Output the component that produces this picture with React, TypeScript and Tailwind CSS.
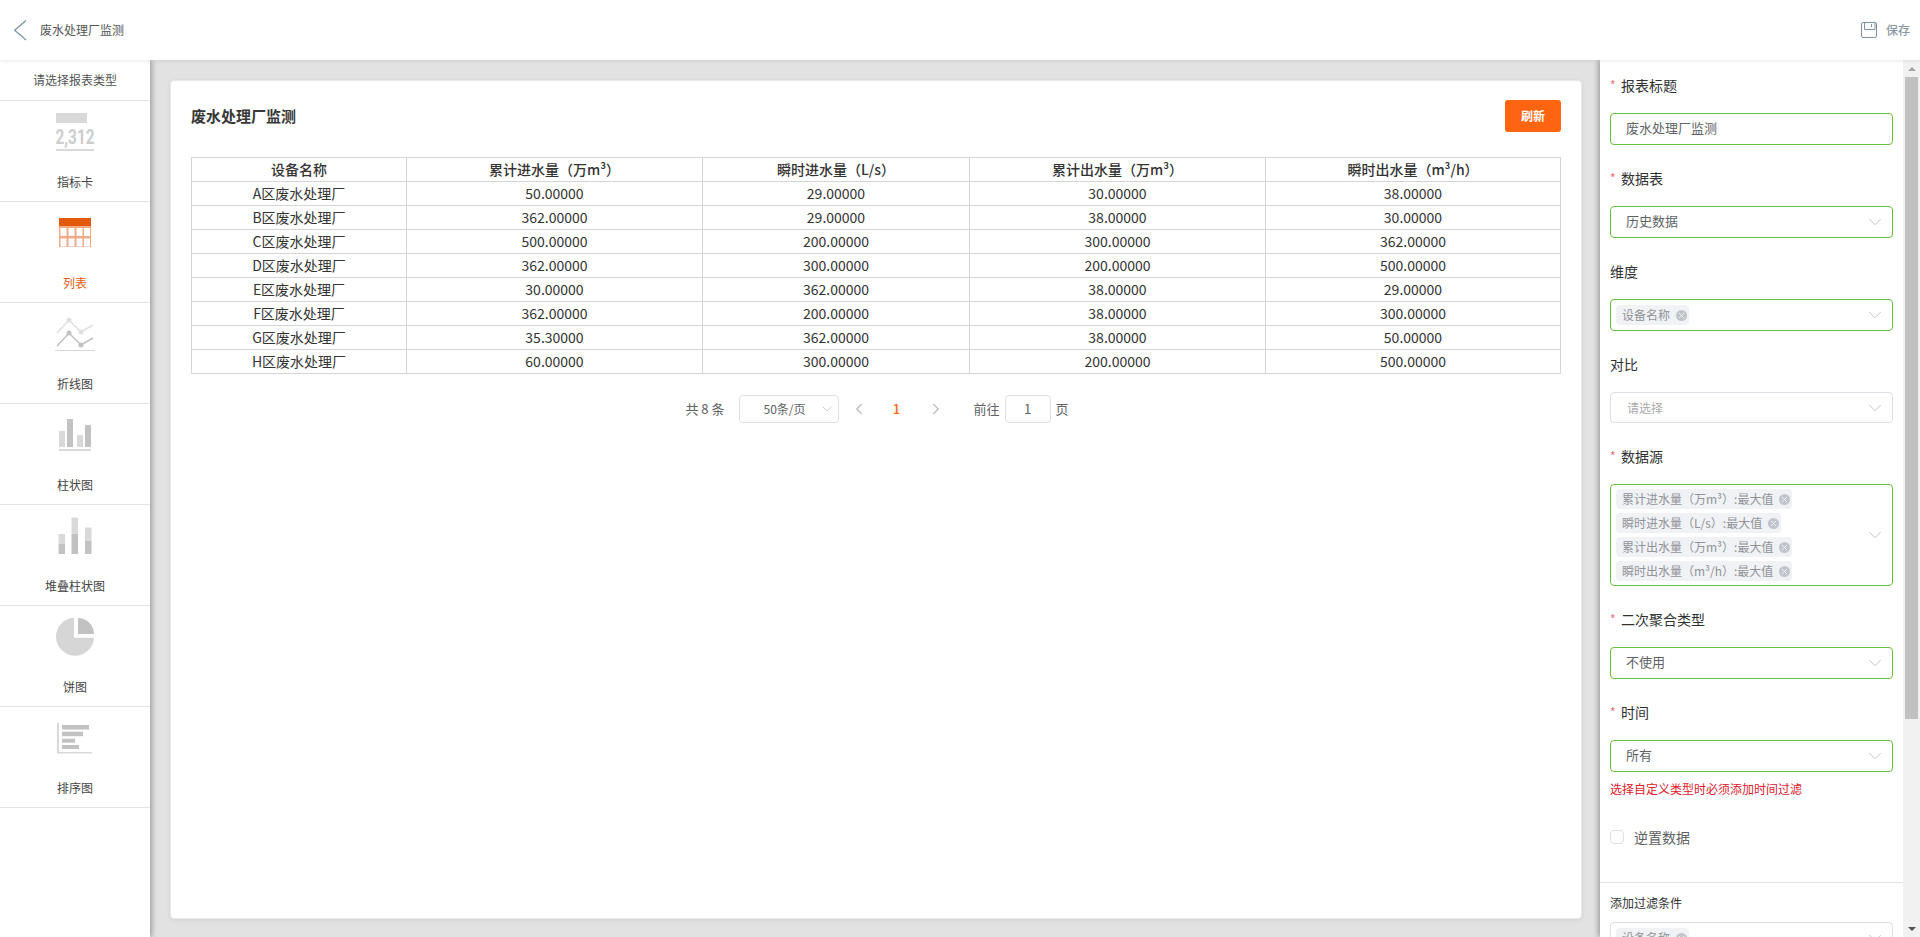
import { ChevronDown, ChevronLeft, ChevronRight, X } from 'lucide-react';
import type { ReactNode } from 'react';

const LIGHT = '#d9d9d9';
const DARK = '#c2c2c2';

const rows = [
  ['A区废水处理厂', '50.00000', '29.00000', '30.00000', '38.00000'],
  ['B区废水处理厂', '362.00000', '29.00000', '38.00000', '30.00000'],
  ['C区废水处理厂', '500.00000', '200.00000', '300.00000', '362.00000'],
  ['D区废水处理厂', '362.00000', '300.00000', '200.00000', '500.00000'],
  ['E区废水处理厂', '30.00000', '362.00000', '38.00000', '29.00000'],
  ['F区废水处理厂', '362.00000', '200.00000', '38.00000', '300.00000'],
  ['G区废水处理厂', '35.30000', '362.00000', '38.00000', '50.00000'],
  ['H区废水处理厂', '60.00000', '300.00000', '200.00000', '500.00000'],
];

const columns = [
  { title: '设备名称', width: 'w-[215px]' },
  { title: '累计进水量（万m³）', width: 'w-[296px]' },
  { title: '瞬时进水量（L/s）', width: 'w-[267px]' },
  { title: '累计出水量（万m³）', width: 'w-[296px]' },
  { title: '瞬时出水量（m³/h）', width: 'w-[295px]' },
];

function IconFrame({ children }: { children: ReactNode }) {
  return (
    <svg width="40" height="40" viewBox="0 0 40 40" className="overflow-visible">
      {children}
    </svg>
  );
}

const chartIcons: { label: string; active?: boolean; icon: ReactNode }[] = [
  {
    label: '指标卡',
    icon: (
      <IconFrame>
        <rect x="1" y="0" width="31" height="10" fill={LIGHT} />
        <text
          x="0.5"
          y="31"
          textLength="39"
          lengthAdjust="spacingAndGlyphs"
          fontFamily="Roboto"
          fontWeight="700"
          fontSize="20"
          fill="#cdcdcd"
        >
          2,312
        </text>
        <rect x="1" y="36" width="38" height="2" fill={LIGHT} />
      </IconFrame>
    ),
  },
  {
    label: '列表',
    active: true,
    icon: (
      <IconFrame>
        <rect x="4" y="4" width="32" height="29" fill="#f2ab85" />
        <rect x="4" y="4" width="32" height="8" fill="#e35a0f" />
        {[14, 24.5].map((y) =>
          [5.5, 13.5, 21.5, 29].map((x) => (
            <rect key={`${x}-${y}`} x={x} y={y} width="6" height="8" fill="#fff" />
          )),
        )}
      </IconFrame>
    ),
  },
  {
    label: '折线图',
    icon: (
      <IconFrame>
        <polyline points="2,18 14,5 26,17 38,10" fill="none" stroke="#e0e0e0" strokeWidth="1.5" />
        <circle cx="14" cy="5" r="2.5" fill="#e0e0e0" />
        <circle cx="26" cy="17" r="2.5" fill="#e0e0e0" />
        <polyline points="2,31 14,18 26,30 38,23" fill="none" stroke={DARK} strokeWidth="1.5" />
        <circle cx="14" cy="18" r="2.5" fill={DARK} />
        <circle cx="26" cy="30" r="2.5" fill={DARK} />
        <rect x="0" y="35" width="40" height="1" fill={LIGHT} />
      </IconFrame>
    ),
  },
  {
    label: '柱状图',
    icon: (
      <IconFrame>
        <rect x="4" y="15" width="6" height="16" fill={LIGHT} />
        <rect x="12" y="3" width="6" height="28" fill={DARK} />
        <rect x="22" y="19" width="6" height="12" fill={LIGHT} />
        <rect x="30" y="9" width="6" height="22" fill={DARK} />
        <rect x="4" y="33" width="32" height="2" fill={LIGHT} />
      </IconFrame>
    ),
  },
  {
    label: '堆叠柱状图',
    icon: (
      <IconFrame>
        <rect x="3.5" y="17" width="6.5" height="10" fill={LIGHT} />
        <rect x="3.5" y="27" width="6.5" height="10" fill={DARK} />
        <rect x="16.5" y="0.5" width="6.5" height="16.5" fill={LIGHT} />
        <rect x="16.5" y="17" width="6.5" height="20" fill={DARK} />
        <rect x="30" y="10.5" width="6.5" height="13.5" fill={LIGHT} />
        <rect x="30" y="24" width="6.5" height="13" fill={DARK} />
      </IconFrame>
    ),
  },
  {
    label: '饼图',
    icon: (
      <IconFrame>
        <path d="M19 -0.3 A19 19 0 1 0 39 19.7 H19 Z" fill="#d6d6d6" />
        <path d="M23 0 A16 16 0 0 1 39 16 H23 Z" fill={DARK} />
      </IconFrame>
    ),
  },
  {
    label: '排序图',
    icon: (
      <IconFrame>
        <rect x="2" y="4" width="2" height="30" fill={LIGHT} />
        <rect x="2" y="33" width="35" height="1.5" fill={LIGHT} />
        <rect x="7" y="6" width="27" height="4.5" fill={DARK} />
        <rect x="7" y="12.7" width="21" height="4.5" fill={DARK} />
        <rect x="7" y="19.7" width="13" height="4" fill={DARK} />
        <rect x="7" y="26" width="17" height="4" fill={DARK} />
      </IconFrame>
    ),
  },
];

function Tag({ children }: { children: ReactNode }) {
  return (
    <span className="flex h-5 w-fit items-center gap-[6px] rounded bg-[#f0f2f5] pl-[6px] pr-[1.5px] text-xs text-[#909399]">
      {children}
      <span className="flex size-[11px] items-center justify-center rounded-full bg-[#c0c4cc] text-white">
        <X size={9} strokeWidth={2} />
      </span>
    </span>
  );
}

function Label({ required, children }: { required?: boolean; children: ReactNode }) {
  return (
    <div className="flex h-10 items-center text-sm text-[#303133]">
      {required && <span className="w-[11px] text-xs text-[#f56c6c]">*</span>}
      {children}
    </div>
  );
}

function Control({
  green = true,
  arrow = true,
  className = 'mt-2 h-8',
  children,
}: {
  green?: boolean;
  arrow?: boolean;
  className?: string;
  children: ReactNode;
}) {
  return (
    <div
      className={`flex w-[283px] items-center rounded border pr-[6px] ${
        green ? 'border-[#67c23a]' : 'border-[#dcdfe6]'
      } ${className}`}
    >
      <div className="min-w-0 flex-1">{children}</div>
      {arrow && <ChevronDown size={22} strokeWidth={1} className="text-[#bcc0ca]" />}
    </div>
  );
}

function ValueText({ children }: { children: ReactNode }) {
  return <div className="pb-[2px] pl-[15px] text-[13px] text-[#606266]">{children}</div>;
}

function Field({
  required,
  label,
  children,
}: {
  required?: boolean;
  label: string;
  children: ReactNode;
}) {
  return (
    <div className="mb-[13px]">
      <Label required={required}>{label}</Label>
      {children}
    </div>
  );
}

function ConfigPanel() {
  return (
    <div className="flex min-w-0 flex-1 flex-col overflow-hidden pt-[5px]">
      <div className="px-[10px]">
        <Field required label="报表标题">
          <Control arrow={false}>
            <ValueText>废水处理厂监测</ValueText>
          </Control>
        </Field>
        <Field required label="数据表">
          <Control>
            <ValueText>历史数据</ValueText>
          </Control>
        </Field>
        <Field label="维度">
          <Control>
            <div className="pl-[5px]">
              <Tag>设备名称</Tag>
            </div>
          </Control>
        </Field>
        <Field label="对比">
          <Control green={false} className="mt-2 h-[31px]">
            <div className="pl-4 text-xs text-[#aaaaaa]">请选择</div>
          </Control>
        </Field>
        <Field required label="数据源">
          <Control className="mt-2 h-[102px]">
            <div className="flex flex-col gap-1 pl-[5px]">
              <Tag>累计进水量（万m³）:最大值</Tag>
              <Tag>瞬时进水量（L/s）:最大值</Tag>
              <Tag>累计出水量（万m³）:最大值</Tag>
              <Tag>瞬时出水量（m³/h）:最大值</Tag>
            </div>
          </Control>
        </Field>
        <Field required label="二次聚合类型">
          <Control>
            <ValueText>不使用</ValueText>
          </Control>
        </Field>
        <Label required>时间</Label>
        <Control>
          <ValueText>所有</ValueText>
        </Control>
        <p className="mt-[8px] text-xs leading-[18px] text-[#e0202c]">选择自定义类型时必须添加时间过滤</p>
        <label className="mt-[29px] flex items-center gap-[10px] text-sm text-[#606266]">
          <span className="size-[14px] rounded-sm border border-[#dcdfe6]" />
          逆置数据
        </label>
      </div>
      <div className="mt-[35px] border-t border-[#e4e4e4] px-[10px] pt-[11px]">
        <div className="text-xs leading-[18px] text-[#303133]">添加过滤条件</div>
        <Control green={false} className="mt-[10px] h-8">
          <div className="pl-[5px]">
            <Tag>设备名称</Tag>
          </div>
        </Control>
      </div>
    </div>
  );
}

function App() {
  return (
    <div className="flex h-[937px] flex-col overflow-hidden bg-white font-['Noto_Sans_CJK_SC','Noto_Sans',sans-serif]">
      <header className="relative z-20 flex h-[60px] shrink-0 items-center justify-between bg-white pr-[10px] shadow-[0_1px_4px_rgba(0,0,0,0.08)]">
        <div className="flex items-center">
          <svg width="40" height="60" viewBox="0 0 40 60" fill="none" stroke="#7c94a5" strokeWidth="1.3">
            <polyline points="26,20.5 14.7,30.3 26,40" />
          </svg>
          <span className="text-xs text-[#555555]">废水处理厂监测</span>
        </div>
        <div className="flex items-center gap-[9px] text-xs font-medium text-[#8c9aa6]">
          <svg width="16" height="16" viewBox="0 0 16 16" fill="none" stroke="#7c94a5" strokeWidth="1">
            <rect x="0.5" y="0.5" width="15" height="15" rx="1.5" />
            <path d="M3.5 0.5 V7.5 H14 V0.5 M10.5 2 V5" />
          </svg>
          保存
        </div>
      </header>

      <div className="flex min-h-0 flex-1">
        <aside className="relative z-10 w-[150px] shrink-0 bg-white shadow-[2px_0_5px_rgba(0,0,0,0.3)]">
          <div className="flex h-[41px] items-center justify-center border-b border-[#e4e4e4] text-xs text-[#555555]">
            请选择报表类型
          </div>
          {chartIcons.map((item) => (
            <div key={item.label} className="flex h-[101px] flex-col items-center border-b border-[#e4e4e4] pt-3">
              {item.icon}
              <span className={`mt-5 text-xs leading-[18px] ${item.active ? 'text-[#e35a0f]' : 'text-[#444444]'}`}>
                {item.label}
              </span>
            </div>
          ))}
        </aside>

        <main className="min-w-0 flex-1 bg-[#e2e2e2] pb-[18px] pl-5 pr-[18px] pt-5">
          <section className="h-full rounded border border-[#e8e8ee] bg-white px-5 pt-[19px] shadow-[0_1px_4px_rgba(0,0,0,0.08)]">
            <div className="flex h-8 items-center justify-between">
              <h1 className="text-[15px] font-bold text-[#383838]">废水处理厂监测</h1>
              <button className="h-8 w-14 rounded-[3px] bg-[#ff6510] text-xs font-bold text-white">刷新</button>
            </div>
            <table className="mt-[25px] w-[1369px] table-fixed border-collapse text-center text-sm text-[#333333]">
              <thead>
                <tr>
                  {columns.map((column) => (
                    <th key={column.title} className={`h-6 border border-[#d5d5d5] p-0 pb-[2px] font-medium ${column.width}`}>
                      {column.title}
                    </th>
                  ))}
                </tr>
              </thead>
              <tbody>
                {rows.map((row) => (
                  <tr key={row[0]}>
                    {row.map((cell, index) => (
                      <td key={index} className="h-6 border border-[#d5d5d5] p-0 pb-[2px] font-normal leading-none">
                        {cell}
                      </td>
                    ))}
                  </tr>
                ))}
              </tbody>
            </table>

            <div className="mt-[21px] flex h-7 w-[1370px] items-center justify-center pl-[2px] text-[13px] text-[#606266]">
              <span>共 8 条</span>
              <div className="relative ml-[14px] flex h-7 w-[100px] items-center justify-center rounded border border-[#dcdfe6] pr-2 text-xs">
                50条/页
                <ChevronDown size={16} strokeWidth={1.2} className="absolute right-[3px] text-[#bcc0ca]" />
              </div>
              <ChevronLeft size={18} strokeWidth={2} className="ml-[11px] text-[#bcc0ca]" />
              <span className="ml-[23px] mr-[24px] w-[12px] text-center font-medium text-[#ff6510]">1</span>
              <ChevronRight size={18} strokeWidth={2} className="text-[#bcc0ca]" />
              <span className="ml-[29px]">前往</span>
              <div className="mx-[5px] flex h-7 w-[46px] items-center justify-center rounded border border-[#dcdfe6]">1</div>
              <span>页</span>
            </div>
          </section>
        </main>

        <aside className="relative z-10 flex w-[320px] shrink-0 bg-white shadow-[-2px_0_5px_rgba(0,0,0,0.3)]">
          <ConfigPanel />
          <div className="flex w-[17px] shrink-0 flex-col items-center bg-[#f1f1f1]">
            <div className="flex h-[17px] items-center justify-center">
              <span className="border-x-[4px] border-b-[4px] border-x-transparent border-b-[#a3a3a3]" />
            </div>
            <div className="h-[642px] w-[13px] bg-[#c1c1c1]" />
            <div className="mt-auto flex h-[17px] items-center justify-center">
              <span className="border-x-[4px] border-t-[4px] border-x-transparent border-t-[#505050]" />
            </div>
          </div>
        </aside>
      </div>
    </div>
  );
}

export default App;
